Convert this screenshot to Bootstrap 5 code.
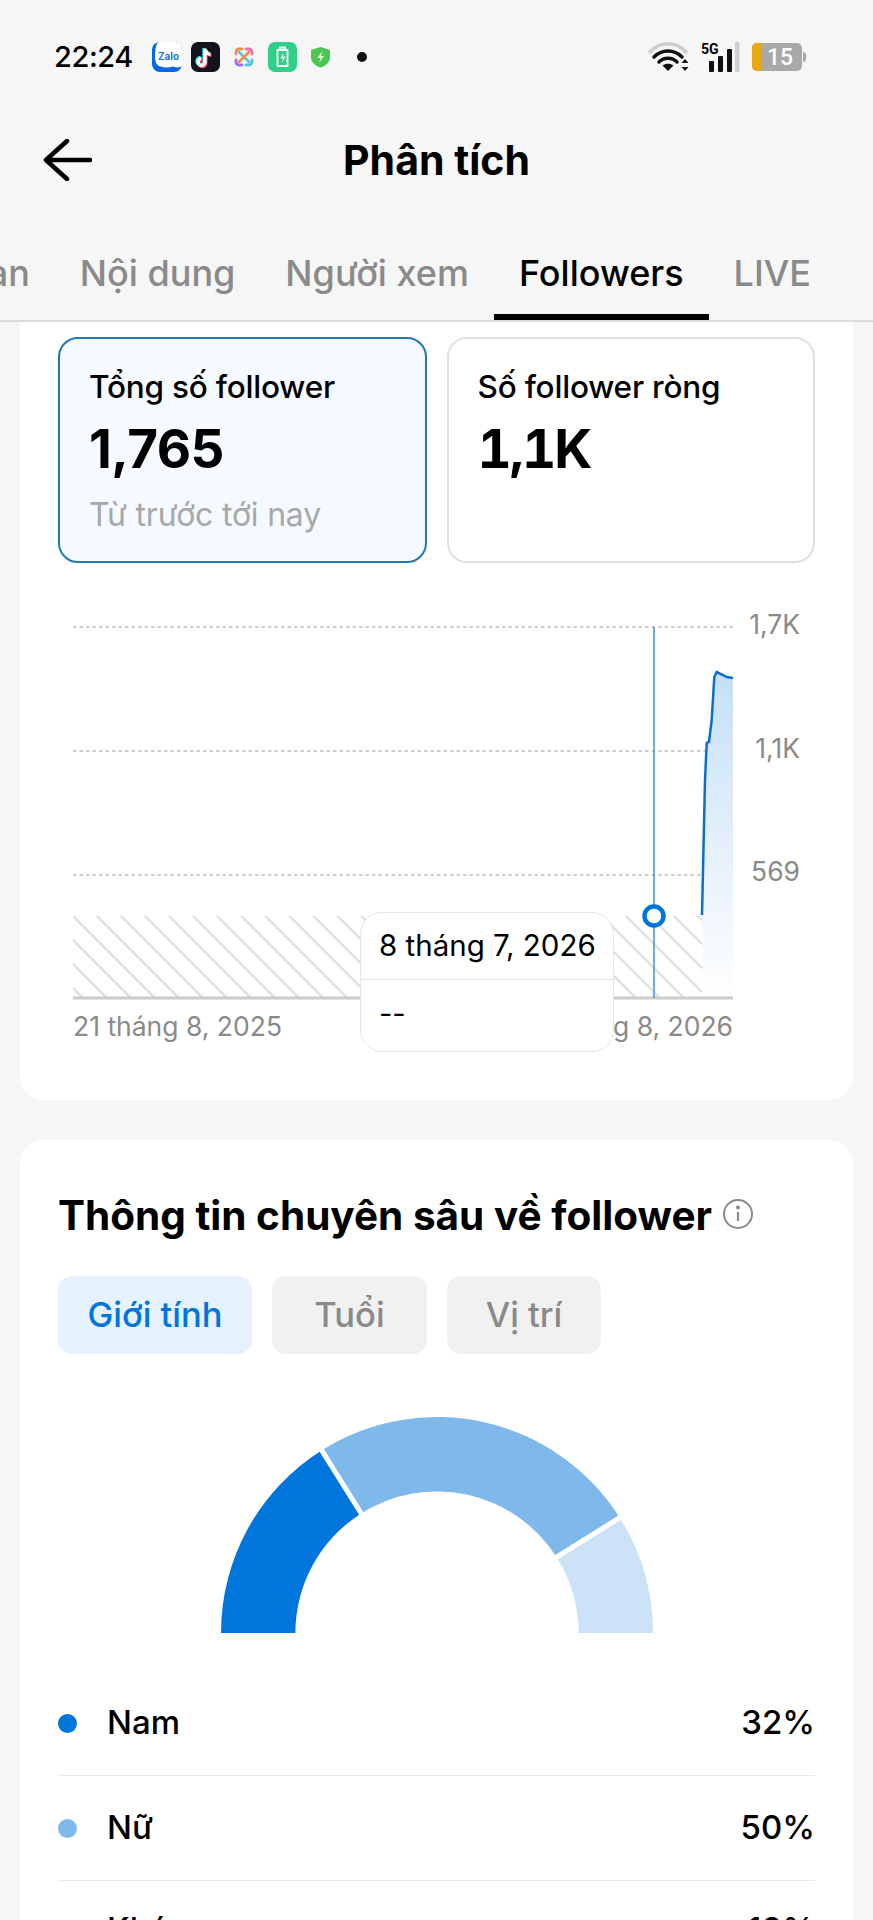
<!DOCTYPE html>
<html lang="vi">
<head>
    <meta charset="UTF-8">
    <meta name="viewport" content="width=device-width, initial-scale=1.0">
    <title>Phân tích</title>
    <link href="https://cdn.jsdelivr.net/npm/bootstrap@5.3.0/dist/css/bootstrap.min.css" rel="stylesheet">
    <style>
        html, body { height: 1920px; overflow: hidden; }
        body { background: #f6f6f6; font-family: Inter, "Noto Sans", sans-serif; color: #000; }

        /* status bar */
        .status-row { height: 114px; padding: 0 67px 0 54px; }
        .status-time { font-size: 29px; font-weight: 500; width: 82px; letter-spacing: -.4px; white-space: nowrap; }
        .status-dot { width: 10px; height: 10px; border-radius: 50%; background: #111; margin-left: 17px; }
        .batt-box { width: 54px; height: 28px; }
        .batt-num { font: 500 23px "Roboto", sans-serif; fill: #fff; }
        .net-label { font: 700 14px "Roboto", sans-serif; }

        /* header */
        .top-head { height: 92px; padding: 0 43px; }
        .top-title { font-size: 41px; font-weight: 700; margin: 0; line-height: 1; }
        .head-side { width: 49px; height: 42px; }

        /* tabs */
        .tab-strip { height: 116px; justify-content: flex-end; overflow: hidden; padding-right: 37px; border-bottom: 2px solid #dcdcdc; flex-wrap: nowrap; align-items: flex-start; }
        .tab-strip .nav-link { color: #8a8a8a; font-size: 36px; font-weight: 500; padding: 45px 25px 0; height: 114px; line-height: 44px; white-space: nowrap; border-bottom: 6px solid transparent; }
        .tab-strip .nav-link.active { color: #000; border-bottom-color: #000; }

        /* panels */
        .sheet { background: #fff; margin: 0 20px; border: 0; padding: 0 38px; }
        .sheet-top { border-radius: 0 0 24px 24px; height: 778px; margin-bottom: 40px; padding-top: 15px; }
        .sheet-bottom { border-radius: 24px 24px 0 0; padding-top: 52px; height: 780px; overflow: hidden; }

        .metric-box { flex: 1 1 0; height: 226px; border-radius: 20px; border: 2px solid #e0e0e0; padding: 26px 29px; }
        .metric-box.picked { background: #f4faff; border-color: #2378b0; }
        .metric-label { font-size: 31.500px; font-weight: 500; line-height: 44px; letter-spacing: -.2px; white-space: nowrap; }
        .metric-value { font-size: 53px; font-weight: 700; line-height: 60px; margin-top: 10px; letter-spacing: -.5px; }
        .metric-value.wide-ones { font-variant-numeric: tabular-nums; letter-spacing: -2px; }
        .metric-sub { font-size: 32px; line-height: 44px; color: #a6a8aa; margin-top: 14px; letter-spacing: -.2px; white-space: nowrap; }

        /* chart */
        .plot-wrap { position: relative; margin: 37px -38px 0; height: 460px; }
        .plot-wrap svg { display: block; }
        .axis-text { font: 400 26.500px Inter, sans-serif; fill: #8a8a8a; }
        .tip-box { position: absolute; left: 340px; top: 312px; width: 254px; height: 140px; background: #fff; border: 1.5px solid #e6e6e6; border-radius: 22px; }
        .tip-date { height: 67px; padding: 0 18px; font-size: 29.500px; line-height: 64px; border-bottom: 1.5px solid #e6e6e6; white-space: nowrap; }
        .tip-val { padding: 0 18px; font-size: 29px; line-height: 68px; }

        /* insights */
        .insight-title { font-size: 40.500px; font-weight: 700; line-height: 48px; margin: 0; white-space: nowrap; }
        .info-mark { margin-left: 10px; margin-bottom: 4px; }
        .pill-row { margin-top: 36px; }
        .pill-btn { height: 78px; border-radius: 14px; background: #f1f1f2; color: #8a8a8a; font-size: 34.500px; font-weight: 500; padding: 0; border: 0; white-space: nowrap; }
        .pill-btn.picked { background: #e5f2fd; color: #0075db; }
        .pill-gender { width: 194px; }
        .pill-age { width: 155px; }
        .pill-place { width: 154px; }
        .gauge-wrap { margin-top: 62px; }
        .gauge-wrap svg { display: block; margin: 0 auto; }

        .legend-list { margin-top: 38px; }
        .legend-item { background: transparent; padding: 0; height: 105px; border-color: #e9e9e9; border-width: 0 0 2px; font-size: 33px; font-weight: 500; color: #000; }
        .legend-dot { width: 19px; height: 19px; border-radius: 50%; margin-right: 30px; }
    </style>
</head>
<body>
    <!-- Thanh trạng thái -->
    <div class="status-row d-flex align-items-center">
        <span class="status-time">22:24</span>
        <div class="d-flex align-items-center ms-3" style="gap:9px">
            <svg width="30" height="30" viewBox="0 0 30 30"><rect width="30" height="30" rx="8" fill="#0a68e0"/><path d="M6 0h17a7 7 0 0 1 7 7v17c-3 2-6 1.500-9 .5-4 1-8 1.500-12 0C5 24 3 20 3 15 3 9 3.500 4 6 0z" fill="#fff"/><text x="16.500" y="18" text-anchor="middle" font-family="Inter" font-size="10" font-weight="600" fill="#0a68e0">Zalo</text></svg>
            <svg width="29" height="30" viewBox="0 0 29 30"><rect width="29" height="30" rx="7" fill="#14141f"/><g fill="none" stroke-width="3.400"><path d="M14 7v13a3.500 3.500 0 1 1-3.500-3.500M14 7c.5 3 2.500 5 5.500 5.500" stroke="#25f4ee" transform="translate(-1 -1)"/><path d="M14 7v13a3.500 3.500 0 1 1-3.500-3.500M14 7c.5 3 2.500 5 5.500 5.500" stroke="#fe2c55" transform="translate(1 1)"/><path d="M14 7v13a3.500 3.500 0 1 1-3.500-3.500M14 7c.5 3 2.500 5 5.500 5.500" stroke="#fff"/></g></svg>
            <svg class="mx-1" width="22" height="22" viewBox="0 0 22 22" fill="none" stroke-width="2.800" stroke-linecap="round"><path d="M3 8V6a3 3 0 0 1 3-3h3" stroke="#f58a4b"/><path d="M13 3h3a3 3 0 0 1 3 3v2" stroke="#ef6fa8"/><path d="M19 14v2a3 3 0 0 1-3 3h-3" stroke="#4fc4ea"/><path d="M9 19H6a3 3 0 0 1-3-3v-2" stroke="#a06bf2"/><path d="M6 6l10 10" stroke="#5cc3ea"/><path d="M16 6 6 16" stroke="#f58a4b"/></svg>
            <svg width="29" height="30" viewBox="0 0 29 30"><rect width="29" height="30" rx="7" fill="#2fcf88"/><path d="M12 7V5.500h5V7M9.500 8h10v16h-10z" fill="none" stroke="#fff" stroke-width="1.800"/><path d="M15.500 10.500l-3 6h2.500l-1 4.500 3.500-6.500h-2.500z" fill="#fff"/></svg>
            <svg class="ms-1" width="21" height="22" viewBox="0 0 21 22"><path d="M10.500 1l9.500 3v7c0 5-4 9-9.500 10.500C5 20 1 16 1 11V4z" fill="#4cc552"/><path d="M12 5l-4.500 7h3l-1.500 5 5-7h-3z" fill="#d6f7c8"/></svg>
            <span class="status-dot"></span>
        </div>
        <div class="d-flex align-items-center ms-auto" style="gap:12px">
            <svg width="42" height="30" viewBox="0 0 42 30" fill="none" stroke-linecap="round"><path d="M2 10C12 -1 28 -1 38 10" stroke="#cfcfcf" stroke-width="3.500"/><path d="M6 15c8-8 20-8 28 0" stroke="#111" stroke-width="3.500"/><path d="M11 20c5-5 13-5 18 0" stroke="#111" stroke-width="3.500"/><path d="M20 29l-5.500-5.500c3-2.500 8-2.500 11 0z" fill="#111"/><path d="M37 17l3.500 4h-7zM37 29l3.500-4h-7z" fill="#111"/></svg>
            <svg width="38" height="30" viewBox="0 0 38 30"><text x="-1" y="11.500" class="net-label">5G</text><rect x="7" y="19" width="5" height="11" rx="1" fill="#111"/><rect x="16" y="14" width="5" height="16" rx="1" fill="#111"/><rect x="25" y="7" width="5" height="23" rx="1" fill="#111"/><rect x="33" y="0" width="4.500" height="30" rx="1" fill="#cfcfcf"/></svg>
            <svg class="batt-box" viewBox="0 0 54 28"><rect x="0" y="0" width="50" height="28" rx="5" fill="#a9a9a9"/><path d="M5 0h4v28H5a5 5 0 0 1-5-5V5a5 5 0 0 1 5-5z" fill="#e8a80f"/><path d="M51 9a3 3 0 0 1 3 3v4a3 3 0 0 1-3 3z" fill="#a9a9a9"/><text x="28" y="22" text-anchor="middle" class="batt-num">15</text></svg>
        </div>
    </div>

    <!-- Cabeçalho -->
    <header class="top-head d-flex align-items-center justify-content-between">
        <svg class="head-side" viewBox="0 0 49 42" fill="none" stroke="#000" stroke-width="4.500" stroke-linecap="round" stroke-linejoin="round"><path d="M47 21H3M24 2 3 21l21 19"/></svg>
        <h1 class="top-title">Phân tích</h1>
        <div class="head-side"></div>
    </header>

    <nav class="nav tab-strip">
        <a class="nav-link" href="#">Tổng quan</a>
        <a class="nav-link" href="#">Nội dung</a>
        <a class="nav-link" href="#">Người xem</a>
        <a class="nav-link active" href="#">Followers</a>
        <a class="nav-link" href="#">LIVE</a>
    </nav>

    <div class="card sheet sheet-top">
        <div class="d-flex" style="gap:20px">
            <div class="metric-box picked">
                <div class="metric-label">Tổng số follower</div>
                <div class="metric-value">1,765</div>
                <div class="metric-sub">Từ trước tới nay</div>
            </div>
            <div class="metric-box">
                <div class="metric-label">Số follower ròng</div>
                <div class="metric-value wide-ones">1,1K</div>
            </div>
        </div>

        <div class="plot-wrap">
            <svg width="833" height="460" viewBox="20 600 833 460">
                <defs>
                    <pattern id="hatch" width="17" height="17" patternUnits="userSpaceOnUse" patternTransform="translate(79 910) rotate(45)">
                        <rect x="0" y="7.500" width="17" height="2" fill="#dadada"/>
                    </pattern>
                    <linearGradient id="areaFill" x1="0" y1="672" x2="0" y2="1000" gradientUnits="userSpaceOnUse">
                        <stop offset="0" stop-color="#c6dff6"/>
                        <stop offset="1" stop-color="#ffffff"/>
                    </linearGradient>
                </defs>
                <g stroke="#bdbdbd" stroke-width="1.500" stroke-dasharray="3.500 3">
                    <line x1="73" y1="627" x2="733" y2="627"/>
                    <line x1="73" y1="751" x2="733" y2="751"/>
                    <line x1="73" y1="875" x2="733" y2="875"/>
                </g>
                <rect x="73" y="916" width="629" height="81" fill="url(#hatch)"/>
                <path d="M702 915 705 780 706.700 743 709 742 711.700 720 714.300 677 716.700 672 723 675 726.700 677 733 678V998H702z" fill="url(#areaFill)"/>
                <path d="M702 915 705 780 706.700 743 709 742 711.700 720 714.300 677 716.700 672 723 675 726.700 677 733 678" fill="none" stroke="#0a6fc8" stroke-width="2.500"/>
                <line x1="73" y1="998" x2="733" y2="998" stroke="#cccccc" stroke-width="3"/>
                <line x1="654" y1="627" x2="654" y2="998" stroke="#3f8fd6" stroke-width="1.500"/>
                <circle cx="654" cy="916" r="9.500" fill="#fff" stroke="#0075db" stroke-width="4.500"/>
                <text class="axis-text" x="800" y="634" text-anchor="end">1,7K</text>
                <text class="axis-text" x="800" y="758" text-anchor="end">1,1K</text>
                <text class="axis-text" x="800" y="881" text-anchor="end">569</text>
                <text class="axis-text" x="73" y="1036">21 tháng 8, 2025</text>
                <text class="axis-text" x="733" y="1036" text-anchor="end">21 tháng 8, 2026</text>
            </svg>
            <div class="tip-box">
                <div class="tip-date">8 tháng 7, 2026</div>
                <div class="tip-val">--</div>
            </div>
        </div>
    </div>

    <div class="card sheet sheet-bottom">
        <div class="d-flex align-items-center">
            <h2 class="insight-title">Thông tin chuyên sâu về follower</h2>
            <svg class="info-mark" width="32" height="32" viewBox="0 0 32 32" fill="none" stroke="#8a8a8a" stroke-width="2"><circle cx="16" cy="16" r="14"/><path d="M16 14v9" stroke-width="2.200"/><circle cx="16" cy="9.500" r="1" fill="#8a8a8a"/></svg>
        </div>
        <div class="d-flex pill-row" style="gap:20px">
            <button class="btn pill-btn pill-gender picked">Giới tính</button>
            <button class="btn pill-btn pill-age">Tuổi</button>
            <button class="btn pill-btn pill-place">Vị trí</button>
        </div>

        <div class="gauge-wrap">
            <svg width="442" height="217" viewBox="-220 -216 440 216">
                <path d="M-215 0A215 215 0 0 1-115 -181.700L-75.500 -119A141 141 0 0 0-141 0z" fill="#0075db"/>
                <path d="M-115 -181.700A215 215 0 0 1 181.700 -115L119 -75.500A141 141 0 0 0-75.500 -119z" fill="#7fb8ea"/>
                <path d="M181.700 -115A215 215 0 0 1 215 0H141A141 141 0 0 0 119 -75.500z" fill="#cbe2f7"/>
                <g stroke="#fff" stroke-width="5">
                    <line x1="-118" y1="-187" x2="-73" y2="-115"/>
                    <line x1="187" y1="-118" x2="115" y2="-73"/>
                </g>
            </svg>
        </div>

        <ul class="list-group list-group-flush legend-list">
            <li class="list-group-item legend-item d-flex align-items-center">
                <span class="legend-dot" style="background:#0075db"></span>Nam<span class="ms-auto">32%</span>
            </li>
            <li class="list-group-item legend-item d-flex align-items-center">
                <span class="legend-dot" style="background:#7fb8ea"></span>Nữ<span class="ms-auto">50%</span>
            </li>
            <li class="list-group-item legend-item d-flex align-items-center pb-2">
                <span class="legend-dot" style="background:#cbe2f7"></span>Khác<span class="ms-auto">18%</span>
            </li>
        </ul>
    </div>

    <script src="https://cdn.jsdelivr.net/npm/bootstrap@5.3.0/dist/js/bootstrap.bundle.min.js"></script>
</body>
</html>
